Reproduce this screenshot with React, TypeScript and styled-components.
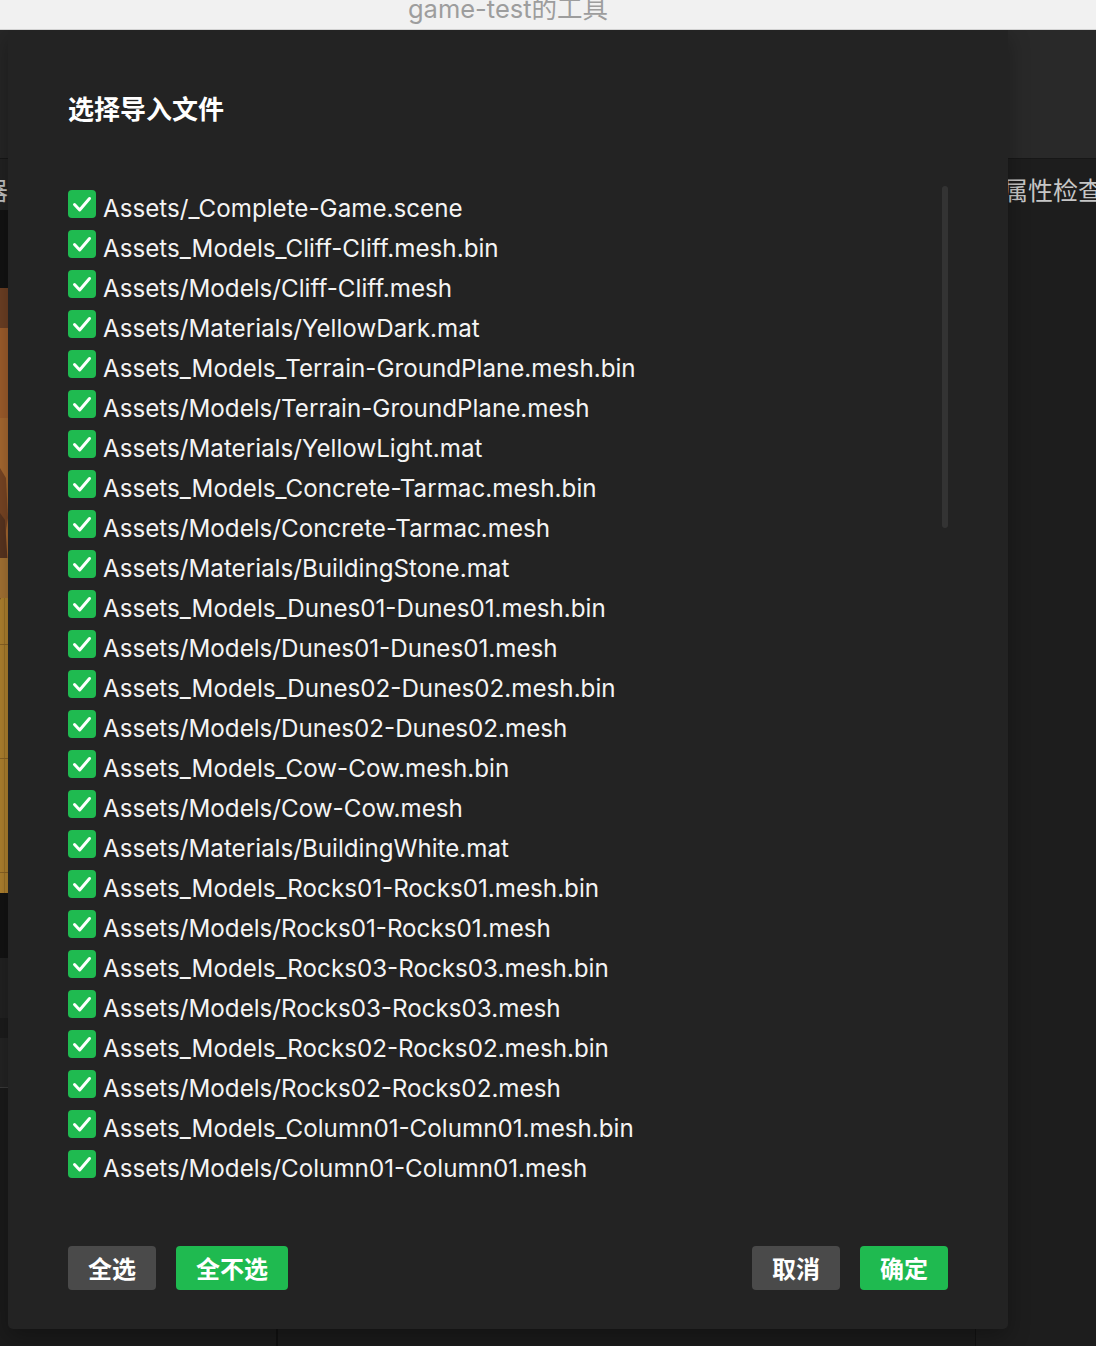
import React from "react";
import styled, { createGlobalStyle } from "styled-components";

const GlobalStyle = createGlobalStyle`
  html, body { margin: 0; padding: 0; background: #1b1b1b; }
  body { font-family: Inter, "Noto Sans CJK SC", sans-serif; }
  * { box-sizing: border-box; }
`;

const Page = styled.div`
  position: relative;
  width: 1096px;
  height: 1346px;
  overflow: hidden;
  display: flex;
  flex-direction: column;
  background: #1b1b1b;
`;

const TitleBar = styled.div`
  position: relative;
  z-index: 2;
  height: 30px;
  flex: none;
  background: #f1f1f1;
  border-bottom: 1px solid #d2d2d2;
  display: flex;
  justify-content: center;
  padding-right: 80px;
  overflow: hidden;
`;

const TitleText = styled.div`
  font-family: Inter, "Noto Sans CJK SC", sans-serif;
  font-size: 25.5px;
  line-height: 24px;
  margin-top: -3px;
  color: #9d9d9d;
  white-space: nowrap;
`;

const Workspace = styled.div`
  flex: 1;
  display: flex;
  min-height: 0;
`;

const Column = styled.div<{ $width: number }>`
  display: flex;
  flex-direction: column;
  width: ${(p) => p.$width}px;
  flex: none;
`;

const CenterColumn = styled.div`
  flex: 1;
  background: #1b1b1b;
  border-left: 2px solid #111;
  border-right: 1px solid #121212;
`;

const Band = styled.div<{ $h?: number; $bg: string; $line?: string }>`
  ${(p) => (p.$h ? `height: ${p.$h}px; flex: none;` : "flex: 1;")}
  background: ${(p) => p.$bg};
  ${(p) => (p.$line ? `border-bottom: 1px solid ${p.$line};` : "")}
`;

const PanelHeader = styled.div<{ $bg: string; $pad: number }>`
  height: 51px;
  flex: none;
  background: ${(p) => p.$bg};
  padding: 12px 0 0 ${(p) => p.$pad}px;
  display: flex;
  overflow: hidden;
`;

const EdgeClip = styled.div`
  width: 8px;
  overflow: hidden;
  display: flex;
  justify-content: flex-end;
`;

const PanelTitle = styled.span`
  font-family: "Noto Sans CJK SC", sans-serif;
  font-size: 25px;
  line-height: 36px;
  color: #c6c6c6;
  white-space: nowrap;
  flex: none;
`;

const SceneBox = styled.div`
  height: 605px;
  flex: none;
  display: flex;
`;

const Modal = styled.div`
  position: absolute;
  left: 8px;
  top: 30px;
  width: 1000px;
  height: 1299px;
  background: #232323;
  border-radius: 0 0 5px 5px;
  box-shadow: 0 8px 22px rgba(0, 0, 0, 0.3);
  padding: 60px 60px 39px;
  display: flex;
  flex-direction: column;
`;

const Heading = styled.h2`
  margin: 0;
  font-family: "Noto Sans CJK SC", sans-serif;
  font-weight: 700;
  font-size: 26px;
  line-height: 36px;
  color: #ffffff;
`;

const ListWrap = styled.div`
  position: relative;
  flex: 1;
  min-height: 0;
  margin: 60px 0;
  overflow: hidden;
`;

const List = styled.ul`
  list-style: none;
  margin: 0;
  padding: 0;
  height: 100%;
  overflow: hidden;
`;

const Row = styled.li`
  height: 40px;
  display: flex;
  align-items: flex-start;
  gap: 7px;
`;

const Check = styled.span`
  width: 28px;
  height: 28px;
  margin-top: 4px;
  flex: none;
  border-radius: 4px;
  background: #1fba50;
  display: flex;
  align-items: center;
  justify-content: center;
`;

const Label = styled.span`
  font-family: Inter, "Noto Sans CJK SC", sans-serif;
  font-size: 24.2px;
  line-height: 36px;
  margin-top: 5px;
  color: #f4f4f4;
  white-space: nowrap;
`;

const Thumb = styled.div`
  position: absolute;
  top: 0;
  right: 0;
  width: 6px;
  height: 342px;
  border-radius: 3px;
  background: #333333;
`;

const Footer = styled.div`
  display: flex;
  justify-content: space-between;
  flex: none;
`;

const Group = styled.div`
  display: flex;
  gap: 20px;
`;

const Button = styled.button<{ $primary?: boolean }>`
  height: 44px;
  padding: 0 20px;
  border: none;
  border-radius: 4px;
  background: ${(p) => (p.$primary ? "#1fba50" : "#4a4a4a")};
  color: #ffffff;
  font-family: "Noto Sans CJK SC", sans-serif;
  font-weight: 700;
  font-size: 24px;
  line-height: 44px;
  cursor: pointer;
`;

const files = [
  "Assets/_Complete-Game.scene",
  "Assets_Models_Cliff-Cliff.mesh.bin",
  "Assets/Models/Cliff-Cliff.mesh",
  "Assets/Materials/YellowDark.mat",
  "Assets_Models_Terrain-GroundPlane.mesh.bin",
  "Assets/Models/Terrain-GroundPlane.mesh",
  "Assets/Materials/YellowLight.mat",
  "Assets_Models_Concrete-Tarmac.mesh.bin",
  "Assets/Models/Concrete-Tarmac.mesh",
  "Assets/Materials/BuildingStone.mat",
  "Assets_Models_Dunes01-Dunes01.mesh.bin",
  "Assets/Models/Dunes01-Dunes01.mesh",
  "Assets_Models_Dunes02-Dunes02.mesh.bin",
  "Assets/Models/Dunes02-Dunes02.mesh",
  "Assets_Models_Cow-Cow.mesh.bin",
  "Assets/Models/Cow-Cow.mesh",
  "Assets/Materials/BuildingWhite.mat",
  "Assets_Models_Rocks01-Rocks01.mesh.bin",
  "Assets/Models/Rocks01-Rocks01.mesh",
  "Assets_Models_Rocks03-Rocks03.mesh.bin",
  "Assets/Models/Rocks03-Rocks03.mesh",
  "Assets_Models_Rocks02-Rocks02.mesh.bin",
  "Assets/Models/Rocks02-Rocks02.mesh",
  "Assets_Models_Column01-Column01.mesh.bin",
  "Assets/Models/Column01-Column01.mesh",
];

const CheckIcon = () => (
  <svg width="28" height="28" viewBox="0 0 28 28" fill="none">
    <path
      d="M6.5 14.5 L11.7 20 L21.5 8.5"
      stroke="#ffffff"
      strokeWidth="3"
      strokeLinecap="round"
      strokeLinejoin="round"
    />
  </svg>
);

const SceneArt = () => (
  <svg width="276" height="605" viewBox="0 0 276 605" preserveAspectRatio="none">
    <rect x="0" y="0" width="276" height="605" fill="#b2832f" />
    <rect x="0" y="0" width="276" height="40" fill="#6e4024" />
    <rect x="0" y="40" width="276" height="90" fill="#a05e2c" />
    <rect x="0" y="130" width="276" height="140" fill="#a96a31" />
    <path d="M0 180 L6 190 L8 230 L3 260 L0 270 Z" fill="#7a4624" />
    <path d="M0 225 L5 232 L8 280 L4 300 L0 312 Z" fill="#5a3520" />
    <rect x="0" y="270" width="276" height="40" fill="#a77434" />
    <rect x="4" y="310" width="1" height="295" fill="#9c7227" />
    <rect x="0" y="356" width="276" height="1" fill="#8c6424" />
    <rect x="0" y="470" width="276" height="1" fill="#8c6424" />
    <rect x="0" y="584" width="276" height="1" fill="#8c6424" />
  </svg>
);

export default function App() {
  return (
    <>
      <GlobalStyle />
      <Page>
        <TitleBar>
          <TitleText>game-test的工具</TitleText>
        </TitleBar>
        <Workspace>
          <Column $width={276}>
            <Band $h={129} $bg="#262626" $line="#171717" />
            <PanelHeader $bg="#222222" $pad={0}>
              <EdgeClip>
                <PanelTitle>层级管理器</PanelTitle>
              </EdgeClip>
            </PanelHeader>
            <Band $h={78} $bg="#131313" />
            <SceneBox>
              <SceneArt />
            </SceneBox>
            <Band $h={65} $bg="#131313" />
            <Band $h={60} $bg="#222222" />
            <Band $h={20} $bg="#1c1c1c" />
            <Band $h={50} $bg="#242424" $line="#3a3a3a" />
            <Band $bg="#1b1b1b" />
          </Column>
          <CenterColumn />
          <Column $width={120}>
            <Band $h={129} $bg="#292929" $line="#171717" />
            <PanelHeader $bg="#1d1d1d" $pad={27}>
              <PanelTitle>属性检查器</PanelTitle>
            </PanelHeader>
            <Band $bg="#1d1d1d" />
          </Column>
        </Workspace>

        <Modal>
          <Heading>选择导入文件</Heading>
          <ListWrap>
            <List>
              {files.map((f) => (
                <Row key={f}>
                  <Check>
                    <CheckIcon />
                  </Check>
                  <Label>{f}</Label>
                </Row>
              ))}
            </List>
            <Thumb />
          </ListWrap>
          <Footer>
            <Group>
              <Button>全选</Button>
              <Button $primary>全不选</Button>
            </Group>
            <Group>
              <Button>取消</Button>
              <Button $primary>确定</Button>
            </Group>
          </Footer>
        </Modal>
      </Page>
    </>
  );
}
